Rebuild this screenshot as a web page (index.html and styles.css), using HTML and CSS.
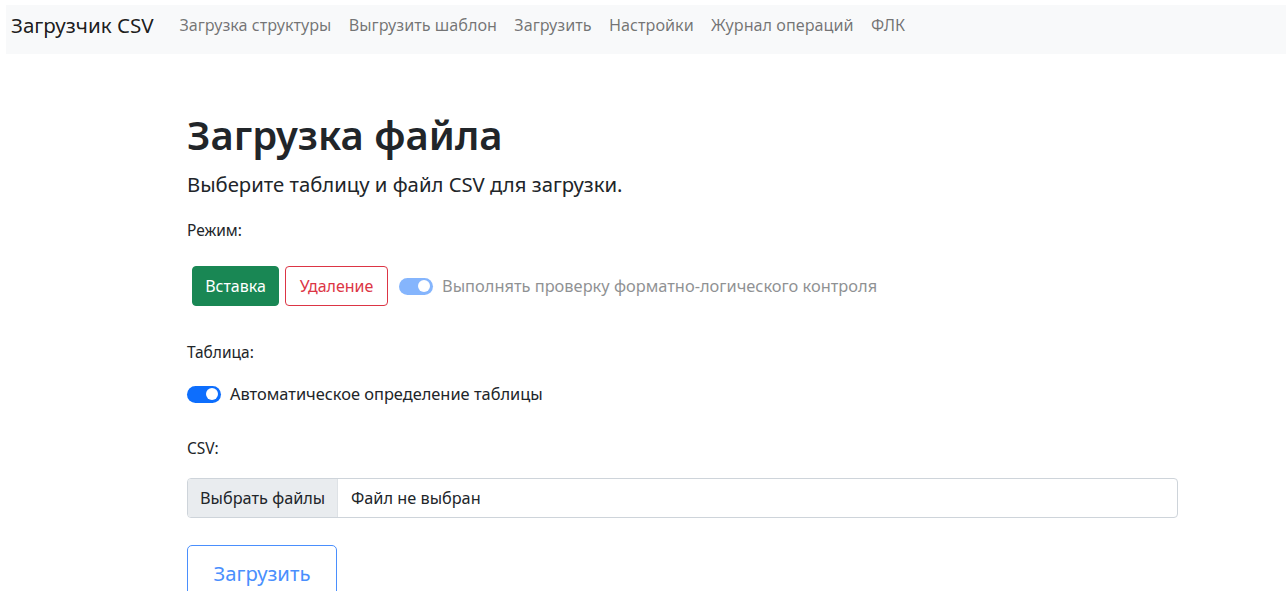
FILE: index.html
```html
<!DOCTYPE html>
<html lang="ru">
<head>
<meta charset="utf-8">
<title>Загрузчик CSV</title>
<link rel="stylesheet" href="styles.css">
</head>
<body>
<nav class="navbar">
  <a class="brand" href="#">Загрузчик CSV</a>
  <ul class="nav">
    <li><a href="#">Загрузка структуры</a></li>
    <li><a href="#">Выгрузить шаблон</a></li>
    <li><a href="#">Загрузить</a></li>
    <li><a href="#">Настройки</a></li>
    <li><a href="#">Журнал операций</a></li>
    <li><a href="#">ФЛК</a></li>
  </ul>
</nav>
<main class="content">
  <h1 class="title">Загрузка файла</h1>
  <p class="lead">Выберите таблицу и файл CSV для загрузки.</p>

  <div class="label">Режим:</div>
  <div class="mode-row">
    <button class="btn btn-success">Вставка</button>
    <button class="btn btn-outline-danger">Удаление</button>
    <label class="switch disabled">
      <span class="switch-track"><span class="knob"></span></span>
      <span class="switch-text">Выполнять проверку форматно-логического контроля</span>
    </label>
  </div>

  <div class="label">Таблица:</div>
  <label class="switch auto">
    <span class="switch-track"><span class="knob"></span></span>
    <span class="switch-text">Автоматическое определение таблицы</span>
  </label>

  <div class="label">CSV:</div>
  <div class="file-input">
    <span class="file-btn">Выбрать файлы</span>
    <span class="file-name">Файл не выбран</span>
  </div>

  <button class="btn btn-outline-primary btn-upload">Загрузить</button>
</main>
</body>
</html>
```
FILE: styles.css
```css
* { box-sizing: border-box; }

body {
  margin: 5px 1px 0 6px;
  font-family: "Noto Sans", "Open Sans", sans-serif;
  font-size: 16.3px;
  color: #212529;
  background: #fff;
  overflow: hidden;
}

.navbar {
  display: flex;
  align-items: center;
  height: 49px;
  padding: 0 5px 9px 5px;
  background: #f8f9fa;
}

.brand {
  font-size: 20.6px;
  line-height: 30px;
  color: rgba(0, 0, 0, 0.9);
  text-decoration: none;
  margin-right: 17px;
}

.nav {
  display: flex;
  list-style: none;
  margin: 0;
  padding: 0;
}

.nav a {
  display: block;
  padding: 0 8.7px;
  font-size: 16.2px;
  line-height: 24px;
  color: rgba(0, 0, 0, 0.55);
  text-decoration: none;
}

.content {
  padding: 57px 0 0 181px;
  width: 1172px;
}

.title {
  font-size: 40px;
  font-weight: 600;
  line-height: 48px;
  margin: 0 0 10px 0;
}

.lead {
  font-size: 20.3px;
  line-height: 30px;
  margin: 0 0 19px 0;
}

.label {
  font-size: 15.5px;
  line-height: 24px;
  margin-bottom: 18px;
}

.mode-row {
  display: flex;
  align-items: center;
  padding: 6px 0 0 5px;
  gap: 6px;
  margin-bottom: 34px;
}

.btn {
  font-family: inherit;
  font-size: 16px;
  line-height: 24px;
  border-radius: 4px;
  border: 1px solid transparent;
  padding: 7px 12px;
  background: transparent;
  white-space: nowrap;
  cursor: pointer;
}

.btn-success {
  width: 87px;
  background: #198754;
  border-color: #198754;
  color: #fff;
}

.btn-outline-danger {
  width: 103px;
  border-color: #dc3545;
  color: #dc3545;
}

.btn-outline-primary {
  border-color: #4a8ffd;
  color: #4a8ffd;
}

.switch {
  display: flex;
  align-items: center;
  gap: 9px;
  font-size: 16.4px;
  line-height: 24px;
}

.mode-row .switch { margin-left: 5px; }

.switch.disabled { opacity: 0.5; }

.switch-track {
  position: relative;
  width: 34px;
  height: 17px;
  border-radius: 9px;
  background: #0d6efd;
  display: inline-block;
  flex: none;
}

.knob {
  position: absolute;
  top: 2.5px;
  right: 3px;
  width: 12px;
  height: 12px;
  border-radius: 50%;
  background: #fff;
}

.switch.auto { margin-bottom: 30px; }

.file-input {
  display: flex;
  height: 40px;
  border: 1px solid #ced4da;
  border-radius: 4px;
  overflow: hidden;
  font-size: 16.3px;
  margin-bottom: 27px;
}

.file-btn {
  display: flex;
  align-items: center;
  padding: 0 12px;
  background: #e9ecef;
  border-right: 1px solid #dee2e6;
  width: 150px;
  flex: none;
  white-space: nowrap;
}

.file-name {
  display: flex;
  align-items: center;
  padding: 0 13px;
  white-space: nowrap;
}

.btn-upload {
  font-size: 20.3px;
  padding: 12px 25px;
  width: 150px;
  height: 56px;
  border-radius: 5px;
}
```
